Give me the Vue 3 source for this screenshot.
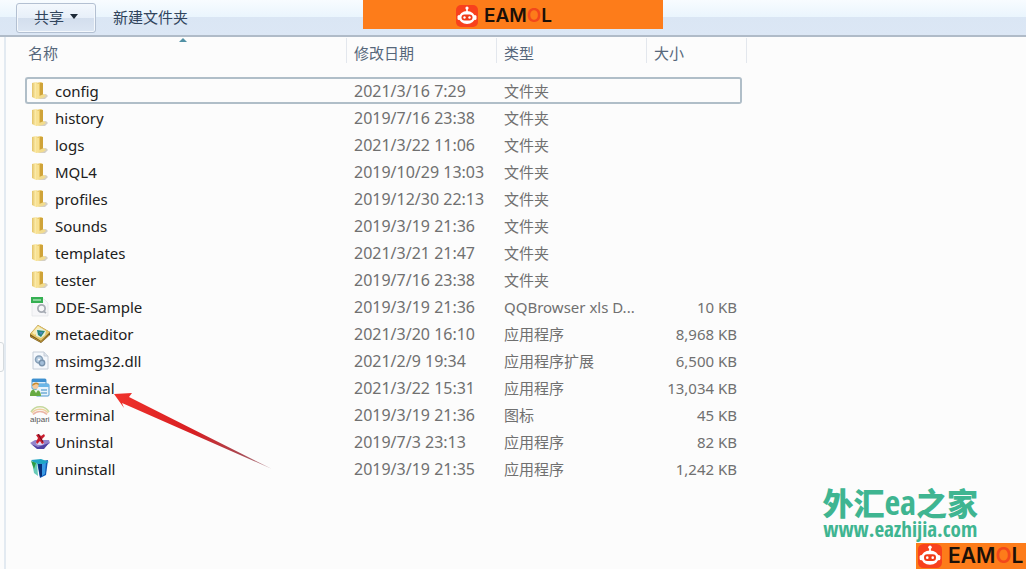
<script setup>
const files = [
  { name: 'config', date: '2021/3/16 7:29', type: '文件夹', size: '', icon: 'folder', focused: true },
  { name: 'history', date: '2019/7/16 23:38', type: '文件夹', size: '', icon: 'folder' },
  { name: 'logs', date: '2021/3/22 11:06', type: '文件夹', size: '', icon: 'folder' },
  { name: 'MQL4', date: '2019/10/29 13:03', type: '文件夹', size: '', icon: 'folder' },
  { name: 'profiles', date: '2019/12/30 22:13', type: '文件夹', size: '', icon: 'folder' },
  { name: 'Sounds', date: '2019/3/19 21:36', type: '文件夹', size: '', icon: 'folder' },
  { name: 'templates', date: '2021/3/21 21:47', type: '文件夹', size: '', icon: 'folder' },
  { name: 'tester', date: '2019/7/16 23:38', type: '文件夹', size: '', icon: 'folder' },
  { name: 'DDE-Sample', date: '2019/3/19 21:36', type: 'QQBrowser xls D...', size: '10 KB', icon: 'sheet' },
  { name: 'metaeditor', date: '2021/3/20 16:10', type: '应用程序', size: '8,968 KB', icon: 'editor' },
  { name: 'msimg32.dll', date: '2021/2/9 19:34', type: '应用程序扩展', size: '6,500 KB', icon: 'dll' },
  { name: 'terminal', date: '2021/3/22 15:31', type: '应用程序', size: '13,034 KB', icon: 'terminal', marked: true },
  { name: 'terminal', date: '2019/3/19 21:36', type: '图标', size: '45 KB', icon: 'alpari' },
  { name: 'Uninstal', date: '2019/7/3 23:13', type: '应用程序', size: '82 KB', icon: 'remove' },
  { name: 'uninstall', date: '2019/3/19 21:35', type: '应用程序', size: '1,242 KB', icon: 'bin' }
]
</script>

<template>
  <div class="window">
    <svg class="sprites" aria-hidden="true">
      <defs>
        <linearGradient id="gold" x1="0" x2="1" y1="0" y2="0">
          <stop offset="0" stop-color="#e2c269" />
          <stop offset=".5" stop-color="#fbeaa6" />
          <stop offset="1" stop-color="#e6c564" />
        </linearGradient>
        <linearGradient id="tail" x1="0" y1="0" x2="1" y2="0">
          <stop offset="0" stop-color="#f0322c" />
          <stop offset=".5" stop-color="#d81f22" />
          <stop offset=".8" stop-color="#a9464f" />
          <stop offset="1" stop-color="#b98d94" />
        </linearGradient>
      </defs>
      <symbol id="folder" viewBox="0 0 20 20">
        <path d="M10 14l6-1 2 2-3 3-6 0z" fill="#b9b0a0" opacity=".6" />
        <path d="M6 2l5-1 2 1v12l-3 3-4-1z" fill="#e9c766" />
        <path d="M10 2l3 0v12l-3 3z" fill="#cfa339" />
        <path d="M2 2l4-1 3 2v14l-3 1-4-2z" fill="url(#gold)" />
        <path d="M6 3l3 0v14l-3 1z" fill="#f8e193" />
        <path d="M9 15l5-2 2 2-3 2-5 1z" fill="#f2dc8e" />
      </symbol>
      <symbol id="sheet" viewBox="0 0 20 20">
        <path d="M2 2h12l4 4v13H2z" fill="#f6f6f8" stroke="#e0e2e5" stroke-width=".7" />
        <path d="M1 0h12v6H1z" fill="#35b052" />
        <path d="M3 3h8" stroke="#a5dfb2" stroke-width="1.500" />
        <circle cx="11.500" cy="11.500" r="3.600" fill="none" stroke="#a8adb5" stroke-width="1.800" />
        <path d="M13 14l3 2" stroke="#a8adb5" stroke-width="1.800" />
      </symbol>
      <symbol id="editor" viewBox="0 0 20 20">
        <path d="M0 10l8-9 12 7v3l-9 8-11-6z" fill="#6f5620" />
        <path d="M0 10l8-9 12 7-9 9z" fill="#e6c565" />
        <path d="M2 9l6-7 3 2-6 7z" fill="#f9edb4" />
        <path d="M6 6l5-2 5 3-1 4-4 3-5-2z" fill="#e6efdd" />
        <path d="M7 6l8 1-4 6-3-2z" fill="#26867a" />
        <path d="M9 8h4l-2 3z" fill="#4c86c0" />
        <path d="M0 12l11 6 8-7" fill="none" stroke="#b98f30" stroke-width="1" />
      </symbol>
      <symbol id="dll" viewBox="0 0 20 20">
        <path d="M3 1h11l4 4v13H3z" fill="#f5f8fc" stroke="#c6ced8" />
        <path d="M14 1v4h4" fill="#dce3ec" stroke="#c6ced8" />
        <circle cx="9" cy="8.500" r="3.500" fill="#b7cde1" stroke="#87a0b8" stroke-width="1.600" />
        <circle cx="12" cy="12" r="2.700" fill="#a4bfda" stroke="#7892ac" stroke-width="1.400" />
        <circle cx="9" cy="8.500" r="1" fill="#fff" />
      </symbol>
      <symbol id="terminal" viewBox="0 0 20 20">
        <rect x="2" y="1" width="14" height="10" rx="1" fill="#d9edfb" stroke="#4f9bd1" />
        <path d="M2 1h14v3H2z" fill="#3d8fd0" />
        <rect x="6" y="6" width="13" height="12" rx="1" fill="#e7f3fc" stroke="#4d98d0" />
        <path d="M6 6h13v3H6z" fill="#6bb6e7" />
        <path d="M11 12h6M11 15h6" stroke="#72add5" stroke-width="1.300" />
        <circle cx="5.500" cy="8" r="3" fill="#f5c99a" />
        <path d="M2 8c0-4 7-5 7-1L6 6z" fill="#c98b2e" />
        <path d="M0 18c0-7 4-7 6-6 4 0 5 3 5 6z" fill="#68ab42" />
        <path d="M4 12l2 3 2-3z" fill="#e9f4df" />
      </symbol>
      <symbol id="remove" viewBox="0 0 20 20">
        <path d="M0 11l5-3 14 0 1 3-7 5H7z" fill="#9385cc" />
        <path d="M1 12l7 3 11-4-5 6H7z" fill="#5042a4" />
        <ellipse cx="10" cy="11" rx="4" ry="2" fill="#ded9f5" />
        <path d="M6 3l3-1 2 2 3-2 1 2-3 3 2 4-2 1-2-3-3 3-1-2 2-4z" fill="#c91c2c" />
        <path d="M8 2l5 8" stroke="#671022" stroke-width="1" />
      </symbol>
      <symbol id="bin" viewBox="0 0 20 20">
        <path d="M7 3l11-2-2 15-6 3z" fill="#0f59b5" />
        <path d="M8 5l4 0v12l-2 1z" fill="#092e78" />
        <path d="M12 4l4-1-1 12-3 2z" fill="#3a9ae5" />
        <path d="M1 1l10-1 8 3-6 2H5z" fill="#20a5c4" />
        <path d="M2 3l5 1 1 13-4-3z" fill="#68cbb8" />
        <path d="M1 2l5 2-2 6z" fill="#2e9c46" />
      </symbol>
      <symbol id="robot" viewBox="0 0 22 22">
        <rect width="22" height="22" rx="5" fill="#f8411d" />
        <path d="M11 3v5" stroke="#fff" stroke-width="1.600" />
        <circle cx="11" cy="3" r="1.600" fill="#fff" />
        <rect x="1.500" y="10" width="3" height="5" rx="1.500" fill="#fff" />
        <rect x="17.500" y="10" width="3" height="5" rx="1.500" fill="#fff" />
        <ellipse cx="11" cy="12.500" rx="8" ry="6.500" fill="#fff" />
        <rect x="5.500" y="9.500" width="11" height="6" rx="3" fill="#f03b18" />
        <circle cx="8.500" cy="12.500" r="1.200" fill="#fff" />
        <circle cx="13.500" cy="12.500" r="1.200" fill="#fff" />
      </symbol>
    </svg>

    <header class="toolbar">
      <button class="share" type="button">共享<span class="drop"></span></button>
      <button class="plain" type="button">新建文件夹</button>
    </header>

    <div class="banner brand">
      <svg class="robot" aria-hidden="true"><use href="#robot" /></svg>
      <span class="word">EAM<span class="ring">O</span>L</span>
    </div>

    <main class="body">
      <div class="splitter"><span class="grip"></span></div>
      <table class="files">
        <colgroup>
          <col class="c-name" /><col class="c-date" /><col class="c-type" /><col class="c-size" />
        </colgroup>
        <thead>
          <tr>
            <th scope="col" class="sorted">名称</th>
            <th scope="col">修改日期</th>
            <th scope="col">类型</th>
            <th scope="col">大小</th>
          </tr>
        </thead>
        <tbody>
          <tr v-for="(file, i) in files" :key="i" :class="{ focused: file.focused }">
            <td class="name">
              <div class="entry">
                <svg v-if="file.icon === 'alpari'" class="icon" viewBox="0 0 20 20" aria-hidden="true">
                  <path d="M1 7c4-7 14-7 18 0" fill="none" stroke="#c6d89d" stroke-width="1.700" />
                  <path d="M2 8c4-5 12-5 16 0" fill="none" stroke="#efcf9e" stroke-width="1.500" />
                  <path d="M3 9.500c4-4 10-4 14 0" fill="none" stroke="#eab5a5" stroke-width="1.500" />
                  <text x="0" y="17" class="tiny">alpari</text>
                </svg>
                <svg v-else class="icon" aria-hidden="true"><use :href="'#' + file.icon" /></svg>
                <span class="label">{{ file.name }}</span>
                <svg v-if="file.marked" class="arrow" viewBox="0 0 160 80" aria-hidden="true">
                  <path d="M0 2L18 1 15 5 158 77 8 11 10 16z" fill="url(#tail)" />
                </svg>
              </div>
            </td>
            <td class="date">{{ file.date }}</td>
            <td>{{ file.type }}</td>
            <td class="size">{{ file.size }}</td>
          </tr>
        </tbody>
      </table>
    </main>

    <div class="watermark">
      <div class="site">外汇<span class="latin">ea</span>之家</div>
      <div class="url">www.eazhijia.com</div>
    </div>
    <div class="corner brand">
      <svg class="robot" aria-hidden="true"><use href="#robot" /></svg>
      <span class="word">EAM<span class="ring">O</span>L</span>
    </div>
  </div>
</template>

<style>
body {
  margin: 0;
}
</style>

<style scoped>
.window {
  position: relative;
  display: flex;
  flex-direction: column;
  min-height: 100vh;
  overflow: hidden;
  background: #fcfcfc;
  font: 15px/20px "Noto Sans", "Noto Sans CJK SC", sans-serif;
  color: #707070;
}
.sprites {
  position: absolute;
  width: 0;
  height: 0;
}
.toolbar {
  display: flex;
  align-items: center;
  gap: 8px;
  height: 35px;
  padding: 0 16px;
  border-bottom: 2px solid #b0bbc8;
  background: linear-gradient(#f8fcff 0, #eaf5fd 17px, #dae6f4 17px, #dce7f5 100%);
}
.toolbar button {
  height: 30px;
  font: inherit;
  color: #31455d;
}
.toolbar .share {
  display: flex;
  align-items: center;
  justify-content: center;
  gap: 6px;
  width: 80px;
  padding: 0 0 2px;
  border: 1px solid #b3c0d2;
  border-radius: 3px;
  background: linear-gradient(#f3f8fd 0, #e7eff9 50%, #d3deed 50%, #dce6f3 100%);
  box-shadow: inset 0 0 0 1px #f4f8fc;
}
.drop {
  border: 4px solid transparent;
  border-top: 5px solid #1e2a38;
  border-bottom: 0;
}
.toolbar .plain {
  padding: 0 9px 2px;
  border: 0;
  background: none;
}
.brand {
  position: absolute;
  box-sizing: border-box;
  display: flex;
  align-items: center;
  overflow: hidden;
  background: #fd7c1a;
  font-family: Inter, sans-serif;
  font-weight: 600;
  color: #1b1008;
  white-space: nowrap;
}
.banner {
  top: 0;
  left: 50%;
  justify-content: center;
  gap: 6px;
  width: 300px;
  height: 29px;
  margin-left: -150px;
  padding: 2px 18px 0 0;
}
.banner .robot {
  width: 22px;
  height: 22px;
}
.banner .word {
  font-size: 19px;
}
.ring {
  color: #f2481b;
}
.corner {
  right: 0;
  bottom: 0;
  gap: 6px;
  width: 110px;
  height: 26px;
  padding-left: 2px;
}
.corner .robot {
  flex: none;
  width: 24px;
  height: 24px;
}
.corner .word {
  font-size: 21px;
}
.body {
  display: flex;
  flex: 1;
  align-items: stretch;
}
.splitter {
  position: relative;
  box-sizing: border-box;
  width: 6px;
  margin-right: 19px;
  border-right: 2px solid #e3eaf1;
}
.grip {
  position: absolute;
  top: 305px;
  left: -4px;
  width: 6px;
  height: 28px;
  border: 1px solid #d5dade;
  border-radius: 3px;
}
.files {
  align-self: flex-start;
  table-layout: fixed;
  width: 717px;
  border-spacing: 0;
}
.c-name { width: 322px; }
.c-date { width: 150px; }
.c-type { width: 150px; }
.c-size { width: 95px; }
th {
  position: relative;
  height: 40px;
  padding: 0 0 8px 7px;
  box-sizing: border-box;
  font-weight: 400;
  text-align: left;
  color: #56677b;
}
th:first-child {
  padding-left: 3px;
}
th::after {
  content: "";
  position: absolute;
  top: 1px;
  right: 0;
  width: 1px;
  height: 25px;
  background: #e3e7ed;
}
th:last-child::after {
  right: -5px;
}
.sorted::before {
  content: "";
  position: absolute;
  top: 1px;
  left: 154px;
  border: 4px solid transparent;
  border-top: 0;
  border-bottom: 4px solid #5291a5;
}
td {
  box-sizing: border-box;
  height: 27px;
  padding: 0 0 0 7px;
  border: 0 solid #b0bec8;
  white-space: nowrap;
}
td.date {
  font-size: 16px;
}
td.size {
  padding: 0 5px 0 0;
  text-align: right;
}
td.name {
  padding: 0 0 0 5px;
}
.focused td {
  border-width: 2px 0;
}
.focused td:first-child {
  padding-left: 3px;
  border-left-width: 2px;
  border-radius: 3px 0 0 3px;
}
.focused td:last-child {
  padding-right: 3px;
  border-right-width: 2px;
  border-radius: 0 3px 3px 0;
}
.entry {
  position: relative;
  display: flex;
  align-items: center;
  gap: 5px;
  color: #202020;
}
.icon {
  width: 20px;
  height: 20px;
}
.tiny {
  font: 8px "Liberation Sans", sans-serif;
  fill: #555;
}
.arrow {
  position: absolute;
  top: 14px;
  left: 84px;
  width: 160px;
  height: 80px;
}
.watermark {
  position: absolute;
  right: 48px;
  bottom: 29px;
  color: #3fb591;
  text-align: center;
  white-space: nowrap;
}
.site {
  font: 900 31px/32px "Noto Sans CJK SC", sans-serif;
}
.latin {
  font-family: "Liberation Sans Narrow", "Open Sans Condensed", sans-serif;
  font-size: 34px;
}
.url {
  font: 700 21px/22px "Liberation Sans Narrow", "Open Sans Condensed", sans-serif;
}
</style>
